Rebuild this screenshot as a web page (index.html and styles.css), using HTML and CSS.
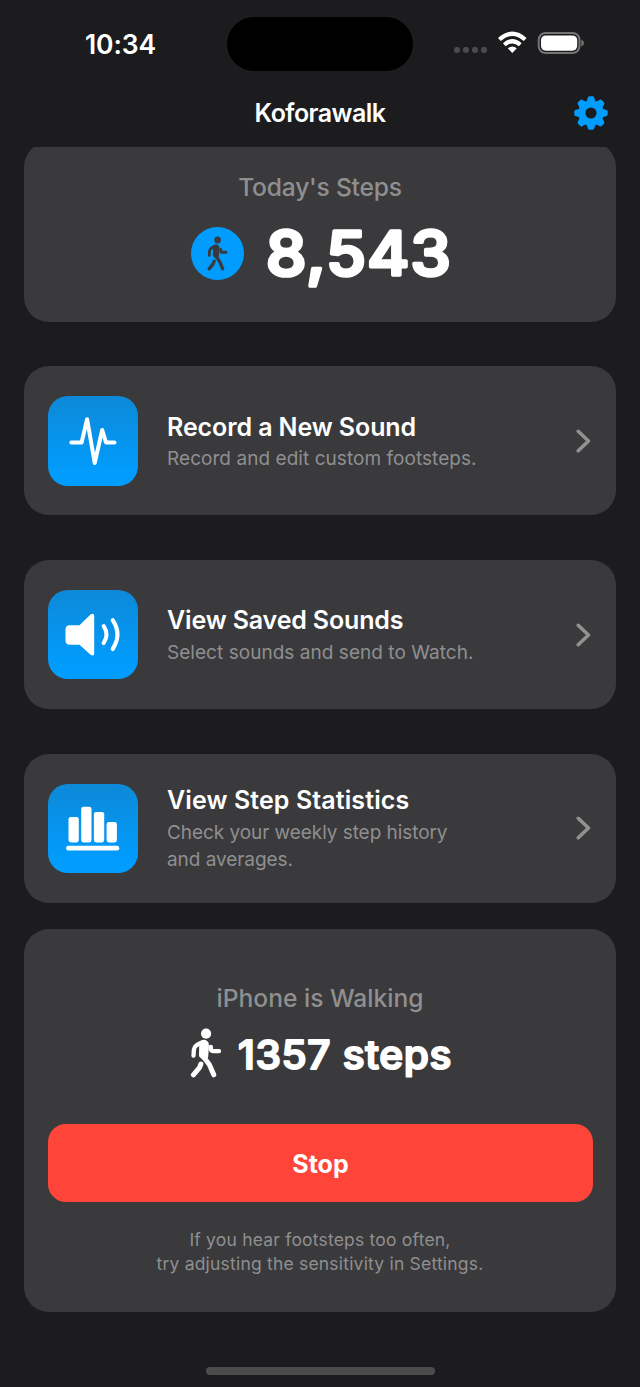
FILE: index.html
```html
<!DOCTYPE html>
<html lang="en">
<head>
<meta charset="utf-8">
<title>Koforawalk</title>
<link rel="stylesheet" href="styles.css">
</head>
<body>
<svg class="defs" width="0" height="0">
  <symbol id="walker" viewBox="0 0 32 50">
    <circle cx="16.1" cy="5.7" r="5.1" fill="currentColor"/>
    <path d="M11.4 14.8Q14.5 13 16.4 15.3Q17 17 16.6 21L16 28.5Q13.5 30 11.2 27.5Z" fill="currentColor" stroke="currentColor" stroke-width="4.4" stroke-linejoin="round"/>
    <path d="M11.5 14.8Q4.6 17 3.9 21.5L3.5 27.6M20.8 18.8V20.4Q21 23.2 23.4 23.2H29" fill="none" stroke="currentColor" stroke-width="4.3" stroke-linecap="round" stroke-linejoin="round"/>
    <path d="M12.8 28L19.3 36.5L23.8 46.8M10.9 36L9.5 39.6L3.4 46.8" fill="none" stroke="currentColor" stroke-width="5" stroke-linecap="round" stroke-linejoin="round"/>
  </symbol>
</svg>
<div class="phone">
  <header class="status">
    <div class="time">10:34</div>
    <div class="island"></div>
    <svg class="signals" width="136" height="30" viewBox="0 0 136 30">
      <g fill="#4b4b4d"><rect x="4" y="19" width="6" height="6" rx="2.4"/><rect x="13" y="19" width="6" height="6" rx="2.4"/><rect x="22" y="19" width="6" height="6" rx="2.4"/><rect x="31" y="19" width="6" height="6" rx="2.4"/></g>
      <g fill="none" stroke="#fff" stroke-width="4.1"><path d="M49.4 11.6Q62.3-.1 75.2 11.6"/><path d="M54.3 16.8Q62.3 9.7 70.3 16.8"/></g>
      <path d="M57.8 20.3Q62.3 16.7 66.8 20.3L62.3 25.1Z" fill="#fff"/>
      <rect x="88.7" y="5" width="40.8" height="20" rx="6.8" fill="none" stroke="#747475" stroke-width="2"/>
      <rect x="91" y="7.4" width="36.2" height="15.3" rx="4.8" fill="#fff"/>
      <path d="M131.3 11.4Q134 12.4 134 15T131.3 18.6Z" fill="#747475"/>
    </svg>
  </header>
  <nav class="nav">
    <h1 class="title">Koforawalk</h1>
    <svg class="gear" width="36" height="36" viewBox="-18 -18 36 36">
      <g fill="#009dff">
        <g id="teeth"><path id="tooth" d="M-4.6-11L-3.1-15.5Q-2.8-16.7-1.6-16.7H1.6Q2.8-16.7 3.1-15.5L4.6-11V11L3.1 15.5Q2.8 16.7 1.6 16.7H-1.6Q-2.8 16.7-3.1 15.5L-4.6 11Z"/><use href="#tooth" transform="rotate(90)"/></g>
        <use href="#teeth" transform="rotate(45)"/>
        <circle r="12.6"/>
      </g>
      <circle r="5.6" fill="#1c1c1e"/>
    </svg>
  </nav>
  <main class="content">
    <section class="card today">
      <div class="label today-label">Today's Steps</div>
      <div class="today-row">
        <div class="badge"><svg width="21" height="35" viewBox="0 0 32 50" preserveAspectRatio="none"><use href="#walker" width="32" height="50"/></svg></div>
        <svg class="number" width="190" height="70" viewBox="0 0 190 70"><text class="big" x="2" y="57" textLength="186" lengthAdjust="spacingAndGlyphs">8,543</text></svg>
      </div>
    </section>
    <section class="card item">
      <div class="tile"><svg width="90" height="90" viewBox="0 0 90 90"><path d="M23.3 46.5H33.6L39.1 23.2L46.7 67L54.2 34L58 46.5H66.5" fill="none" stroke="#fff" stroke-width="4" stroke-linecap="round" stroke-linejoin="round"/></svg></div>
      <div class="copy"><h2 class="heading t-record">Record a New Sound</h2><p class="sub s-record">Record and edit custom footsteps.</p></div>
      <svg class="chevron" width="18" height="26" viewBox="0 0 18 26"><path d="M3.2 3.3L13.5 13L3.2 22.7"/></svg>
    </section>
    <section class="card item">
      <div class="tile"><svg width="90" height="90" viewBox="0 0 90 90"><path d="M22 35.2H31.5L42.3 24.8Q46.2 22 46.2 26V63.2Q46.2 67.2 42.3 64.4L31.5 54.7H22Q17.5 54.7 17.5 50.4V39.5Q17.5 35.2 22 35.2Z" fill="#fff"/><path d="M55.7 36.2Q61.2 44.6 55.7 53M64.7 30.2Q74.2 44.6 64.7 59" fill="none" stroke="#fff" stroke-width="4.1" stroke-linecap="round"/></svg></div>
      <div class="copy"><h2 class="heading t-saved">View Saved Sounds</h2><p class="sub s-saved">Select sounds and send to Watch.</p></div>
      <svg class="chevron" width="18" height="26" viewBox="0 0 18 26"><path d="M3.2 3.3L13.5 13L3.2 22.7"/></svg>
    </section>
    <section class="card item">
      <div class="tile"><svg width="90" height="90" viewBox="0 0 90 90" fill="#fff"><rect x="20.5" y="33" width="10.3" height="25.4" rx="2.3"/><rect x="33.2" y="22.7" width="10.3" height="35.7" rx="2.3"/><rect x="45.9" y="27.9" width="10.3" height="30.5" rx="2.3"/><rect x="58.6" y="38.1" width="10.3" height="20.3" rx="2.3"/><rect x="18.1" y="61.8" width="53.2" height="4.7" rx="2.35"/></svg></div>
      <div class="copy stats-copy"><h2 class="heading t-stats">View Step Statistics</h2><p class="sub s-stats">Check your weekly step history<br>and averages.</p></div>
      <svg class="chevron" width="18" height="26" viewBox="0 0 18 26"><path d="M3.2 3.3L13.5 13L3.2 22.7"/></svg>
    </section>
    <section class="card walking">
      <div class="label walking-label">iPhone is Walking</div>
      <div class="walking-row">
        <svg class="walk-icon" width="32" height="50"><use href="#walker" width="32" height="50"/></svg>
        <svg class="count" width="220" height="50" viewBox="0 0 220 50"><text class="medium" x="2" y="40.6" textLength="214" lengthAdjust="spacingAndGlyphs">1357 steps</text></svg>
      </div>
      <button class="stop">Stop</button>
      <p class="hint"><span class="h-one">If you hear footsteps too often,</span><br><span class="h-two">try adjusting the sensitivity in Settings.</span></p>
    </section>
  </main>
  <div class="home"></div>
</div>
</body>
</html>
```
FILE: styles.css
```css
* { box-sizing: border-box; margin: 0; padding: 0; }
body { background: #1c1c1e; font-family: Inter, "Liberation Sans", sans-serif; color: #fff; }
svg { display: block; flex: none; }
.defs { position: absolute; }
.phone { width: 640px; height: 1387px; display: flex; flex-direction: column; overflow: hidden; background: #1c1c1e; }
.status { height: 88px; flex: none; display: grid; grid-template-columns: 227px 186px 227px; }
.time { padding: 28px 0 0 85px; font-size: 26.5px; line-height: 32px; font-weight: 600; letter-spacing: -0.15px; }
.island { height: 54.5px; margin-top: 16.7px; border-radius: 27.5px; background: #000; }
.signals { margin: 28px 0 0 37px; }
.nav { height: 59px; flex: none; display: grid; grid-template-columns: 1fr auto 1fr; align-items: start; padding: 7px 31.5px 0; }
.title { grid-column: 2; font-size: 25px; line-height: 36px; font-weight: 600; letter-spacing: -0.55px; }
.gear { justify-self: end; }
.content { height: 1200px; flex: none; overflow: hidden; padding: 0 24px; }
.card { width: 592px; background: #3a3a3c; border-radius: 25px; }
.today { height: 179.5px; margin-top: -5px; padding-top: 29px; display: flex; flex-direction: column; align-items: center; }
.label { color: #8f8f90; font-weight: 500; font-size: 24.6px; line-height: 32px; }
.today-label { letter-spacing: -0.2px; font-weight: 450; }
.today-row { display: flex; align-items: center; margin-top: 15px; gap: 20px; padding-left: 5px; }
.badge { width: 53px; height: 53px; border-radius: 50%; background: #009dff; color: #3a3a3c; display: flex; align-items: center; justify-content: center; }
.number, .count { fill: #fff; stroke: #fff; stroke-linejoin: round; overflow: visible; }
.big { font-size: 61px; font-weight: 500; letter-spacing: 1.2px; stroke-width: 3.6px; }
.medium { font-size: 39px; font-weight: 500; letter-spacing: 0.6px; stroke-width: 2px; }
.item { height: 149px; margin-top: 44.8px; padding: 0 24px; display: flex; align-items: center; }
.tile { width: 89.5px; height: 89.5px; flex: none; border-radius: 20px; overflow: hidden; background: linear-gradient(#0d89d7, #009dff 90%); }
.copy { flex: 1; margin-left: 29.5px; padding-top: 2px; white-space: nowrap; }
.stats-copy { padding-top: 1px; }
.heading { font-size: 25px; line-height: 32px; font-weight: 600; }
.t-record { letter-spacing: -0.1px; }
.t-saved { letter-spacing: -0.15px; }
.t-stats { letter-spacing: 0.1px; }
.sub { font-size: 19px; line-height: 26.6px; color: #8f8f90; margin-top: 3.8px; }
.s-record { letter-spacing: 0.05px; }
.s-saved { letter-spacing: 0.04px; }
.s-stats { letter-spacing: -0.06px; }
.chevron { margin-right: -1.2px; fill: none; stroke: #919192; stroke-width: 3.6px; stroke-linecap: round; stroke-linejoin: round; }
.walking { height: 383px; margin-top: 26.5px; padding: 53px 24px 0; }
.walking-label { text-align: center; }
.walking-row { display: flex; justify-content: center; align-items: center; margin-top: 14px; gap: 14px; padding-left: 6px; }
.stop { display: block; width: 545px; height: 78px; margin-top: 46px; padding-top: 1px; border: 0; border-radius: 18px; background: #ff453a; color: #fff; font: 700 25px/30px Inter, sans-serif; }
.hint { margin-top: 25.5px; text-align: center; font-size: 17.5px; line-height: 24px; color: #8f8f90; white-space: nowrap; letter-spacing: 0.2px; }
.home { width: 229px; height: 8px; flex: none; align-self: center; margin-top: 20px; border-radius: 4px; background: #4c4c4d; }
```
